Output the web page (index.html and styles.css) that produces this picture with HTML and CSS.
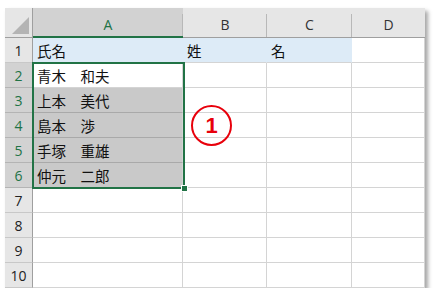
FILE: index.html
```html
<!DOCTYPE html>
<html lang="ja">

<head>
  <meta charset="UTF-8" />
  <meta name="viewport" content="width=device-width, initial-scale=1.0" />
  <title>Sheet</title>
  <link rel="stylesheet" href="styles.css">
</head>

<body>
  <div class="sheet">
    <div class="grid">
      <!-- column headers -->
      <div class="corner"><span class="tri"></span></div>
      <div class="colhead active">A</div>
      <div class="colhead">B</div>
      <div class="colhead">C</div>
      <div class="colhead last">D</div>

      <div class="rowhead">1</div>
      <div class="cell blue">氏名</div>
      <div class="cell blue">姓</div>
      <div class="cell blue">名</div>
      <div class="cell"></div>

      <div class="rowhead sel">2</div>
      <div class="cell">青木　和夫</div>
      <div class="cell"></div>
      <div class="cell"></div>
      <div class="cell"></div>

      <div class="rowhead sel">3</div>
      <div class="cell grey">上本　美代</div>
      <div class="cell"></div>
      <div class="cell"></div>
      <div class="cell"></div>

      <div class="rowhead sel">4</div>
      <div class="cell grey">島本　渉</div>
      <div class="cell"></div>
      <div class="cell"></div>
      <div class="cell"></div>

      <div class="rowhead sel">5</div>
      <div class="cell grey">手塚　重雄</div>
      <div class="cell"></div>
      <div class="cell"></div>
      <div class="cell"></div>

      <div class="rowhead sel">6</div>
      <div class="cell grey">仲元　二郎</div>
      <div class="cell"></div>
      <div class="cell"></div>
      <div class="cell"></div>

      <div class="rowhead">7</div>
      <div class="cell"></div>
      <div class="cell"></div>
      <div class="cell"></div>
      <div class="cell"></div>

      <div class="rowhead">8</div>
      <div class="cell"></div>
      <div class="cell"></div>
      <div class="cell"></div>
      <div class="cell"></div>

      <div class="rowhead">9</div>
      <div class="cell"></div>
      <div class="cell"></div>
      <div class="cell"></div>
      <div class="cell"></div>

      <div class="rowhead">10</div>
      <div class="cell"></div>
      <div class="cell"></div>
      <div class="cell"></div>
      <div class="cell"></div>
    </div>

    <!-- selection range A2:A6 -->
    <div class="selection"><span class="handle"></span></div>

    <!-- annotation -->
    <div class="mark">1</div>
  </div>
</body>

</html>
```

FILE: styles.css
```css
* {
  box-sizing: border-box;
}

body {
  margin: 0;
  background: #fff;
  font-family: "Noto Sans CJK JP", "Noto Sans", sans-serif;
  color: #222;
}

.sheet {
  position: relative;
  width: 420px;
  margin: 8px 0 0 5px;
  box-shadow: 3px 3px 4px rgba(0, 0, 0, 0.35);
}

.grid {
  display: grid;
  grid-template-columns: 28px 150px 84px 85px 73px;
  grid-template-rows: 30px repeat(10, 25px);
  background: #fff;
}

/* header row */
.corner {
  position: relative;
  background: #e6e6e6;
  border-right: 1px solid #9f9f9f;
  border-bottom: 1px solid #9f9f9f;
}

.tri {
  position: absolute;
  right: 3px;
  bottom: 3px;
  width: 0;
  height: 0;
  border-left: 17px solid transparent;
  border-bottom: 17px solid #b4b4b4;
}

.colhead {
  display: flex;
  align-items: center;
  justify-content: center;
  padding-top: 4px;
  background: #e6e6e6;
  border-bottom: 1px solid #9f9f9f;
  font-family: "Open Sans", "Noto Sans", sans-serif;
  font-size: 14px;
  color: #333;
  background-image: linear-gradient(#e6e6e6, #e6e6e6);
  box-shadow: inset -1px 0 0 0 transparent;
  position: relative;
}

.colhead::after {
  content: "";
  position: absolute;
  right: 0;
  top: 6px;
  bottom: 0;
  width: 1px;
  background: #b8b8b8;
}

.colhead.last::after {
  display: none;
}

.colhead.active {
  background: #d2d2d2;
  color: #217346;
  border-bottom: 2px solid #217346;
}

/* row headers */
.rowhead {
  display: flex;
  align-items: center;
  justify-content: center;
  background: #e6e6e6;
  border-right: 1px solid #9f9f9f;
  border-bottom: 1px solid #c8c8c8;
  font-family: "Open Sans", "Noto Sans", sans-serif;
  font-size: 14px;
  color: #222;
}

.rowhead.sel {
  background: #d2d2d2;
  color: #217346;
  border-bottom-color: #b4b4b4;
}

/* cells */
.cell {
  display: flex;
  align-items: center;
  padding-left: 4px;
  border-right: 1px solid #d4d4d4;
  border-bottom: 1px solid #d4d4d4;
  font-size: 14.5px;
  color: #111;
  white-space: nowrap;
}

.cell.blue {
  background: #ddebf7;
  border-right-color: #ddebf7;
  border-bottom-color: #d4d4d4;
}

.cell.grey {
  background: #c9c9c9;
  border-bottom-color: #a9a9a9;
}

/* selection frame */
.selection {
  position: absolute;
  left: 27px;
  top: 54px;
  width: 153px;
  height: 127px;
  border: 2px solid #217346;
}

.handle {
  position: absolute;
  right: -5px;
  bottom: -5px;
  width: 7px;
  height: 7px;
  background: #217346;
  border: 1px solid #fff;
}

/* red circled number */
.mark {
  position: absolute;
  left: 186px;
  top: 97px;
  width: 41px;
  height: 41px;
  border: 2px solid #e8000b;
  border-radius: 50%;
  display: flex;
  align-items: center;
  justify-content: center;
  font-family: "Liberation Sans", Arial, sans-serif;
  font-weight: bold;
  font-size: 22px;
  color: #e8000b;
}
```
